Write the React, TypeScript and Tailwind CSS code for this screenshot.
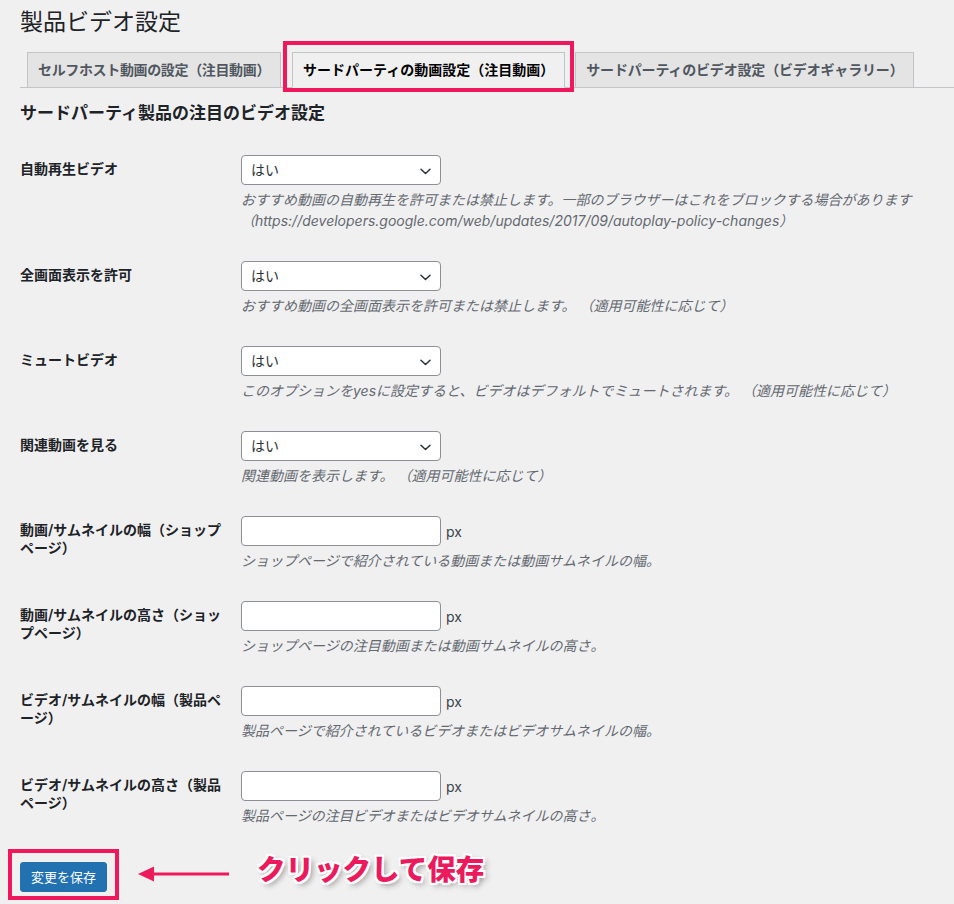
import React from 'react';

type Row = {
  label: string[];
  kind: 'select' | 'px';
  desc: string[];
};

const rows: Row[] = [
  {
    label: ['自動再生ビデオ'],
    kind: 'select',
    desc: [
      'おすすめ動画の自動再生を許可または禁止します。一部のブラウザーはこれをブロックする場合があります',
      '（https://developers.google.com/web/updates/2017/09/autoplay-policy-changes）',
    ],
  },
  { label: ['全画面表示を許可'], kind: 'select', desc: ['おすすめ動画の全画面表示を許可または禁止します。 （適用可能性に応じて）'] },
  { label: ['ミュートビデオ'], kind: 'select', desc: ['このオプションをyesに設定すると、ビデオはデフォルトでミュートされます。 （適用可能性に応じて）'] },
  { label: ['関連動画を見る'], kind: 'select', desc: ['関連動画を表示します。 （適用可能性に応じて）'] },
  { label: ['動画/サムネイルの幅（ショップ', 'ページ）'], kind: 'px', desc: ['ショップページで紹介されている動画または動画サムネイルの幅。'] },
  { label: ['動画/サムネイルの高さ（ショッ', 'プページ）'], kind: 'px', desc: ['ショップページの注目動画または動画サムネイルの高さ。'] },
  { label: ['ビデオ/サムネイルの幅（製品ペ', 'ージ）'], kind: 'px', desc: ['製品ページで紹介されているビデオまたはビデオサムネイルの幅。'] },
  { label: ['ビデオ/サムネイルの高さ（製品', 'ページ）'], kind: 'px', desc: ['製品ページの注目ビデオまたはビデオサムネイルの高さ。'] },
];

function Chevron() {
  return (
    <svg width="11" height="7" viewBox="0 0 11 7" fill="none" className="absolute right-[9px] top-[12px]">
      <path d="M1 1.2l4.5 4.3L10 1.2" stroke="#2c3338" strokeWidth="1.5" strokeLinecap="round" strokeLinejoin="round" />
    </svg>
  );
}

function SettingRow({ row }: { row: Row }) {
  return (
    <div className="flex">
      <div className="w-[210px] shrink-0 pt-5 pb-5 pr-[10px] text-[14px] font-semibold leading-[18px] text-[#1d2327]">
        {row.label.map((l) => (
          <div key={l} className="whitespace-nowrap">{l}</div>
        ))}
      </div>
      <div className="py-[15px] pl-[11px]">
        {row.kind === 'select' ? (
          <div className="relative h-[30px] w-[200px] rounded-[4px] border border-[#8c8f94] bg-white pl-[9px] text-[14px] leading-[28px] text-[#2c3338]">
            はい
            <Chevron />
          </div>
        ) : (
          <div className="flex items-center gap-[5px]">
            <div className="h-[30px] w-[200px] rounded-[4px] border border-[#8c8f94] bg-white" />
            <span className="text-[14px] text-[#3c434a]">px</span>
          </div>
        )}
        <div className="mt-1 text-[14px] italic leading-[21px] text-[#646970]">
          {row.desc.map((d) => (
            <div key={d} className="whitespace-pre">{d}</div>
          ))}
        </div>
      </div>
    </div>
  );
}

export default function App() {
  return (
    <div className="min-h-screen overflow-hidden bg-[#f0f0f1] pl-5 pt-[7px] font-['Inter','Noto_Sans_CJK_JP',sans-serif] text-[#3c434a]">
      <h1 className="text-[23px] font-normal leading-[30px] text-[#1d2327]">製品ビデオ設定</h1>

      <div className="mt-[15px] flex border-b border-[#c3c4c7] text-[14px] font-bold leading-[24px]">
        <div className="-mb-px ml-[7px] border border-[#c3c4c7] bg-[#e4e4e5] px-[10px] py-[5px] tracking-[-0.35px] text-[#50575e]">
          セルフホスト動画の設定（注目動画）
        </div>
        <div className="relative -mb-px ml-[11px] border border-[#c3c4c7] border-b-[#f0f0f1] bg-[#f0f0f1] px-[10px] py-[5px] text-black">
          サードパーティの動画設定（注目動画）
          <div className="pointer-events-none absolute -left-[10px] -right-[10px] -top-[12px] -bottom-[5px] border-4 border-[#f0175c]" />
        </div>
        <div className="-mb-px ml-[10px] border border-[#c3c4c7] bg-[#e4e4e5] px-[10px] py-[5px] tracking-[-0.17px] text-[#50575e]">
          サードパーティのビデオ設定（ビデオギャラリー）
        </div>
      </div>

      <h2 className="mt-[13px] text-[17px] font-bold leading-[24px] text-[#1d2327]">サードパーティ製品の注目のビデオ設定</h2>

      <div className="mt-[15px]">
        {rows.map((r) => (
          <SettingRow key={r.label.join('')} row={r} />
        ))}
      </div>

      <div className="mt-[21px] flex items-center">
        <div className="relative">
          <button className="h-[30px] rounded-[3px] border border-[#2271b1] bg-[#2271b1] px-[10px] text-[13px] leading-[28px] text-white">
            変更を保存
          </button>
          <div className="pointer-events-none absolute -left-[12px] -right-[12px] -top-[13px] -bottom-[8px] border-4 border-[#f0175c]" />
        </div>
        <svg width="92" height="18" viewBox="0 0 92 18" className="ml-[31px] -mt-[6px]">
          <path d="M14 9H91" stroke="#ee1b5c" strokeWidth="3" />
          <path d="M0 9L16 1.5V16.5Z" fill="#ee1b5c" />
        </svg>
        <span className="-mt-[14px] ml-[27px] text-[28.5px] font-black leading-[40px] text-[#ec1a5d] [text-shadow:2px_0_0_#fff,-2px_0_0_#fff,0_2px_0_#fff,0_-2px_0_#fff,2px_2px_0_#fff,-2px_-2px_0_#fff,2px_-2px_0_#fff,-2px_2px_0_#fff,3px_3px_6px_rgba(0,0,0,0.45)]">
          クリックして保存
        </span>
      </div>
    </div>
  );
}
